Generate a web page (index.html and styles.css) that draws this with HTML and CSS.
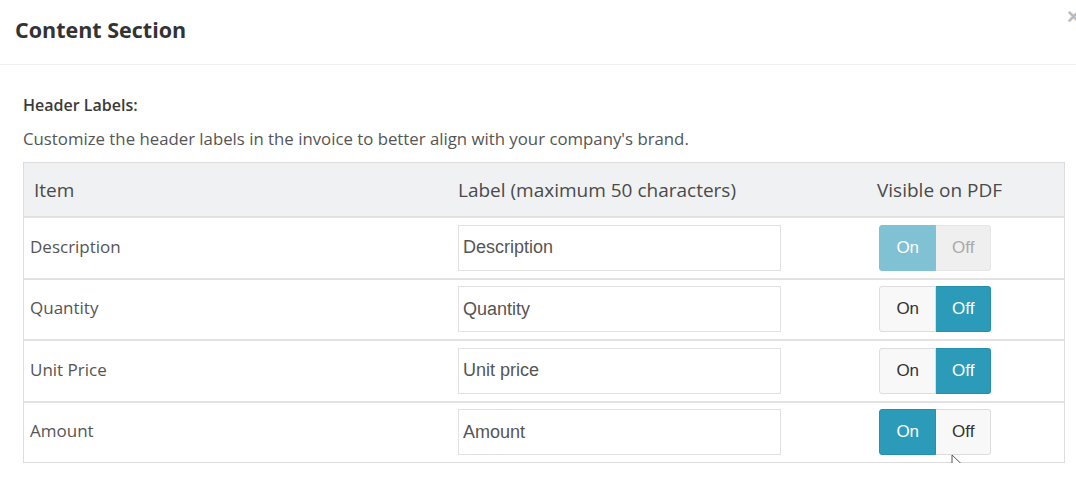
FILE: index.html
```html
<!DOCTYPE html>
<html lang="en">
<head>
    <meta charset="UTF-8">
    <meta name="viewport" content="width=device-width, initial-scale=1.0">
    <title>Content Section</title>
    <link rel="stylesheet" href="styles.css">
</head>
<body>
    <div class="modal">
        <header class="modal-header">
            <h1>Content Section</h1>
            <span class="close">&times;</span>
        </header>

        <section class="modal-body">
            <h2>Header Labels:</h2>
            <p class="hint">Customize the header labels in the invoice to better align with your company's brand.</p>

            <div class="labels-table">
                <div class="row head">
                    <div class="cell item">Item</div>
                    <div class="cell label">Label (maximum 50 characters)</div>
                    <div class="cell visible">Visible on PDF</div>
                </div>

                <div class="row">
                    <div class="cell item">Description</div>
                    <div class="cell label"><input type="text" value="Description"></div>
                    <div class="cell visible">
                        <div class="toggle disabled">
                            <span class="opt on active">On</span>
                            <span class="opt off">Off</span>
                        </div>
                    </div>
                </div>

                <div class="row">
                    <div class="cell item">Quantity</div>
                    <div class="cell label"><input type="text" value="Quantity"></div>
                    <div class="cell visible">
                        <div class="toggle">
                            <span class="opt on">On</span>
                            <span class="opt off active">Off</span>
                        </div>
                    </div>
                </div>

                <div class="row">
                    <div class="cell item">Unit Price</div>
                    <div class="cell label"><input type="text" value="Unit price"></div>
                    <div class="cell visible">
                        <div class="toggle">
                            <span class="opt on">On</span>
                            <span class="opt off active">Off</span>
                        </div>
                    </div>
                </div>

                <div class="row">
                    <div class="cell item">Amount</div>
                    <div class="cell label"><input type="text" value="Amount"></div>
                    <div class="cell visible">
                        <div class="toggle">
                            <span class="opt on active">On</span>
                            <span class="opt off">Off</span>
                            <!-- mouse pointer from the recording -->
                            <svg class="cursor" width="14" height="22" viewBox="0 0 14 22">
                                <path d="M1 1 L1 16 L4.5 12.5 L7.5 19.5 L10 18.5 L7 11.5 L12 11.5 Z" fill="#fff" stroke="#555" stroke-width="1" stroke-linejoin="round"/>
                            </svg>
                        </div>
                    </div>
                </div>
            </div>
        </section>
    </div>
</body>
</html>
```

FILE: styles.css
```css
/* styles.css */
body {
    margin: 0;
    padding: 0;
    background-color: #fff;
    font-family: "Open Sans", "Noto Sans", sans-serif;
    color: #333;
    overflow: hidden;
}

.modal {
    width: 1076px;
}

.modal-header {
    position: relative;
    height: 64px;
    border-bottom: 1px solid #f1f1f1;
    padding: 0 15px;
    display: flex;
    align-items: center;
}

.modal-header h1 {
    margin: 0 0 6px 0;
    font-size: 21.5px;
    font-weight: 700;
    color: #333;
}

.close {
    position: absolute;
    left: 1067px;
    top: 4px;
    font-family: "Liberation Sans", Arial, sans-serif;
    font-size: 22px;
    font-weight: 700;
    color: #bbb;
}

.modal-body {
    padding: 28px 13px 0 23px;
}

.modal-body h2 {
    margin: 0;
    font-size: 16px;
    font-weight: 600;
    line-height: 24px;
    color: #3a3a3a;
}

.hint {
    margin: 10px 0 11px 0;
    font-size: 16.8px;
    line-height: 24px;
    color: #555;
}

.labels-table {
    width: 1040px;
    border: 1px solid #ddd;
}

.row {
    display: grid;
    grid-template-columns: 423px 421px 1fr;
    align-items: center;
    height: 59.5px;
    border-top: 2px solid #e2e2e2;
}

.row.head {
    height: 53px;
    border-top: none;
    background-color: #f0f1f2;
    font-size: 19px;
    color: #4a4a4a;
}

.cell {
    padding-left: 11px;
}

.row .item {
    padding-left: 6px;
    padding-bottom: 3px;
    font-size: 17px;
    color: #555;
}

.row.head .item {
    padding-left: 10px;
    padding-bottom: 0;
    font-size: 19px;
    color: #4a4a4a;
}

.row.head .visible {
    padding-left: 9px;
}

.label input {
    width: 323px;
    height: 46px;
    box-sizing: border-box;
    border: 1px solid #e2e2e2;
    padding: 0 4px;
    font-family: "Liberation Sans", Arial, sans-serif;
    font-size: 18px;
    color: #555;
    outline: none;
}

.toggle {
    position: relative;
    display: flex;
    width: 112px;
    height: 46px;
    font-family: "Liberation Sans", Arial, sans-serif;
    font-size: 17px;
}

.opt {
    display: flex;
    align-items: center;
    justify-content: center;
    background-color: #f8f8f8;
    color: #333;
    border: 1px solid #ddd;
}

.opt.on {
    width: 57px;
    border-radius: 3px 0 0 3px;
}

.opt.off {
    width: 55px;
    border-left: none;
    border-radius: 0 3px 3px 0;
}

.opt.active {
    background-color: #2b9bb9;
    border-color: #2590ad;
    color: #fff;
}

.toggle.disabled .opt.active {
    background-color: #80c1d4;
    border-color: #80c1d4;
}

.toggle.disabled .opt.off {
    background-color: #efefef;
    border-color: #e6e6e6;
    color: #aaa;
}

.cursor {
    position: absolute;
    left: 72px;
    top: 45px;
}
```
